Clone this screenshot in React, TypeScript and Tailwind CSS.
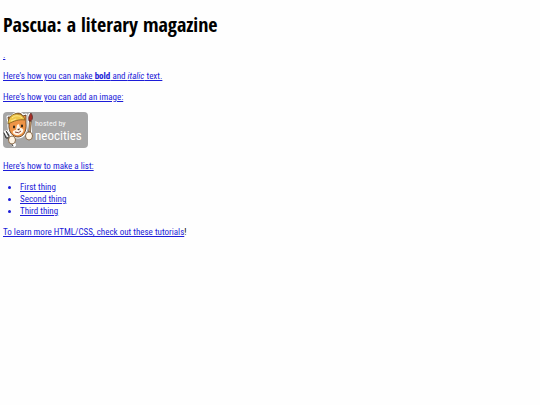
import type { ReactNode } from "react";

function Link({ children }: { children: ReactNode }) {
  return (
    <a href="#tutorials" className="text-[#1c1cd8] underline">
      {children}
    </a>
  );
}

function NeocitiesBadge() {
  return (
    <svg
      viewBox="0 0 85 36"
      role="img"
      aria-label="Hosted by Neocities"
      className="block h-9 w-[85px]"
    >
      <rect width="85" height="36" rx="4" fill="#a6a6a6" />
      {/* fork and its arm */}
      <path d="M3 20l4 5 4 8" stroke="#fff" strokeWidth="4" strokeLinecap="round" fill="none" />
      <g stroke="#333" strokeWidth="1" strokeLinecap="round" fill="none">
        <path d="M1 21l2 5 3 0 0-3-3-4M3.500 20l2 4M5 26l5 8" />
      </g>
      {/* brush */}
      <path d="M27 3l0 17" stroke="#fff" strokeWidth="4" strokeLinecap="round" />
      <path d="M26.500 9h2l-1 11h-2z" fill="#c69b68" stroke="#443026" strokeWidth=".6" />
      <path d="M26 9c-1-3 0-6 2-8 2 3 2 6 0 8z" fill="#a72f28" stroke="#4c201b" strokeWidth=".7" />
      {/* cat */}
      <path
        d="M6 12L5 5l4 0C12 0 18 0 20 4l3-1 0 8c1 9-3 14-8 14S5 20 6 12z"
        fill="#ee9446"
        stroke="#fff"
        strokeWidth="3"
        strokeLinejoin="round"
      />
      <path
        d="M6 12L5 5l4 0C12 0 18 0 20 4l3-1 0 8c1 9-3 14-8 14S5 20 6 12z"
        fill="#ee9446"
        stroke="#48301b"
        strokeWidth=".8"
      />
      <path d="M14 13l2-1 1 4c3 0 4 2 3 4-3 4-8 4-10 1-1-2 1-3 3-3z" fill="#fff4e5" />
      <path
        d="M5 12C5 5 10 1 15 2c4 0 6 3 7 6-6-1-11 1-17 4z"
        fill="#efc64b"
        stroke="#7b5b1e"
        strokeWidth=".8"
      />
      <path d="M9 6c3-3 7-3 10 0M8 9l5-2" stroke="#ffe889" strokeWidth="1" fill="none" />
      <ellipse cx="11" cy="15" rx="1" ry="1.400" fill="#252018" />
      <ellipse cx="19" cy="14" rx="1" ry="1.400" fill="#252018" />
      <path d="M14 17l3-.5-1 2z" fill="#402a21" />
      <path d="M12 20q4 2 6-1" fill="none" stroke="#7b2d20" strokeWidth=".9" />
      <ellipse cx="9" cy="28" rx="3.500" ry="4" fill="#fff5e5" stroke="#76502c" strokeWidth=".8" />
      <ellipse cx="26" cy="24" rx="3.500" ry="4" fill="#fff5e5" stroke="#76502c" strokeWidth=".8" />
      <text x="32" y="14" fontSize="8" fill="#f4f4f4">
        hosted by
      </text>
      <text x="32" y="28" fontSize="13" fill="#fff">
        neocities
      </text>
    </svg>
  );
}

export default function App() {
  return (
    <main className="min-h-screen bg-[#fefefe] px-[3px] pt-[13px] font-['Roboto_Condensed','Roboto',sans-serif] text-[9px] leading-3 text-black">
      <h1 className="mb-3 font-['Open_Sans_Condensed','Open_Sans',sans-serif] text-xl leading-6 font-bold">
        Pascua: a literary magazine
      </h1>
      <div className="flex flex-col gap-[9px]">
        <p><Link>.</Link></p>
        <p>
          <Link>
            Here's how you can make <strong>bold</strong> and <em>italic</em> text.
          </Link>
        </p>
        <p><Link>Here's how you can add an image:</Link></p>
        <a href="#neocities" className="self-start"><NeocitiesBadge /></a>
        <p className="pt-[3px]"><Link>Here's how to make a list:</Link></p>
        <ul className="list-disc pl-[17px] marker:text-[#1c1cd8]">
          <li><Link>First thing</Link></li>
          <li><Link>Second thing</Link></li>
          <li><Link>Third thing</Link></li>
        </ul>
        <p><Link>To learn more HTML/CSS, check out these tutorials</Link>!</p>
      </div>
    </main>
  );
}
